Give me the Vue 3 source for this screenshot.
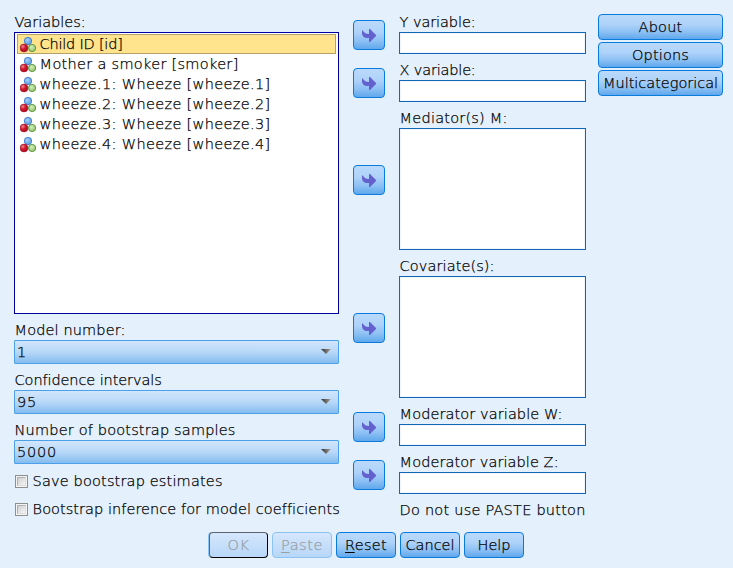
<script setup>
const variables = [
  { text: 'Child ID [id]', width: 83, selected: true },
  { text: 'Mother a smoker [smoker]', width: 199 },
  { text: 'wheeze.1: Wheeze [wheeze.1]', width: 231 },
  { text: 'wheeze.2: Wheeze [wheeze.2]', width: 231 },
  { text: 'wheeze.3: Wheeze [wheeze.3]', width: 231 },
  { text: 'wheeze.4: Wheeze [wheeze.4]', width: 231 },
]
const selects = [
  { label: 'Model number:', width: 111, value: '1', valueWidth: 9 },
  { label: 'Confidence intervals', width: 147, value: '95', valueWidth: 20 },
  { label: 'Number of bootstrap samples', width: 221, value: '5000', valueWidth: 40 },
]
const checks = [
  { label: 'Save bootstrap estimates', width: 190 },
  { label: 'Bootstrap inference for model coefficients', width: 307 },
]
const targets = [
  { label: 'Y variable:', width: 76 },
  { label: 'X variable:', width: 76 },
  { label: 'Mediator(s) M:', width: 108, tall: true },
  { label: 'Covariate(s):', width: 95, tall: true },
  { label: 'Moderator variable W:', width: 163 },
  { label: 'Moderator variable Z:', width: 159 },
]
const side = [
  { label: 'About', width: 44 },
  { label: 'Options', width: 57 },
  { label: 'Multicategorical', width: 115 },
]
const actions = [
  { key: '', label: 'OK', width: 22, kind: 'default' },
  { key: 'P', label: 'aste', width: 42, kind: 'disabled' },
  { key: 'R', label: 'eset', width: 42 },
  { key: '', label: 'Cancel', width: 49 },
  { key: '', label: 'Help', width: 33 },
]

// Spreads the letters of a label over the given width.
const vFit = {
  mounted(el, { value }) {
    const natural = el.getBoundingClientRect().width
    el.style.letterSpacing = `${(value - natural) / el.textContent.length}px`
  },
}
</script>

<template>
  <div class="dialog">
    <div class="columns">
      <section class="left">
        <div class="label"><span v-fit="71" class="t">Variables:</span></div>
        <div class="list">
          <div v-for="v in variables" :key="v.text" class="item" :class="{ selected: v.selected }">
            <svg class="balls" width="16" height="16" viewBox="0 0 16 16">
              <defs>
                <radialGradient id="blue" cx=".4" cy=".35" r=".65"><stop offset="0" stop-color="#a9d0f8" /><stop offset="1" stop-color="#5b9be0" /></radialGradient>
                <radialGradient id="red" cx=".35" cy=".3" r=".7"><stop offset="0" stop-color="#f58a94" /><stop offset=".5" stop-color="#d01830" /><stop offset="1" stop-color="#b00c20" /></radialGradient>
                <radialGradient id="green" cx=".4" cy=".35" r=".65"><stop offset="0" stop-color="#d3edba" /><stop offset="1" stop-color="#94c870" /></radialGradient>
              </defs>
              <circle cx="8" cy="4" r="3.7" fill="url(#blue)" stroke="#3b7fc8" stroke-width=".9" />
              <circle cx="4" cy="11" r="3.9" fill="url(#red)" stroke="#a81426" stroke-width=".7" />
              <circle cx="12.1" cy="11" r="3.6" fill="url(#green)" stroke="#548c38" stroke-width=".9" />
            </svg>
            <span v-fit="v.width" class="t">{{ v.text }}</span>
          </div>
        </div>
        <div v-for="s in selects" :key="s.label" class="group">
          <div class="label"><span v-fit="s.width" class="t">{{ s.label }}</span></div>
          <div class="select">
            <span v-fit="s.valueWidth" class="t">{{ s.value }}</span>
            <svg width="10" height="5" viewBox="0 0 10 5">
              <defs><linearGradient id="tri"><stop offset="0" stop-color="#303030" /><stop offset="1" stop-color="#aaa49c" /></linearGradient></defs>
              <path d="M0 0H10L5 5Z" fill="url(#tri)" />
            </svg>
          </div>
        </div>
        <div class="checks">
          <div v-for="c in checks" :key="c.label" class="check">
            <span class="box"><i></i></span>
            <span v-fit="c.width" class="t">{{ c.label }}</span>
          </div>
        </div>
      </section>

      <section class="middle">
        <div v-for="t in targets" :key="t.label" class="target" :class="{ tall: t.tall }">
          <button class="btn arrow">
            <svg width="14" height="13" viewBox="0 0 14 13">
              <path d="M0 1L3 4Q4 5 7 5V0H8L14 6V7L8 13H7V9H4Q0 8 0 4Z" fill="#6461cf" />
            </svg>
          </button>
          <div>
            <div class="label"><span v-fit="t.width" class="t">{{ t.label }}</span></div>
            <div class="field"></div>
          </div>
        </div>
        <div class="note label"><span v-fit="186" class="t">Do not use PASTE button</span></div>
      </section>

      <section class="side">
        <button v-for="b in side" :key="b.label" class="btn"><span v-fit="b.width" class="t">{{ b.label }}</span></button>
      </section>
    </div>

    <div class="actions">
      <button v-for="a in actions" :key="a.label" class="btn" :class="a.kind">
        <span v-fit="a.width" class="t"><u v-if="a.key">{{ a.key }}</u>{{ a.label }}</span>
      </button>
    </div>
  </div>
</template>

<style>
body { background: #e4f0fc; }
</style>

<style scoped>
.dialog {
  box-sizing: border-box;
  width: 733px;
  height: 568px;
  padding-top: 14px;
  background: #e4f0fc;
  color: #000;
  font: 200 14.5px/18px "DejaVu Sans", sans-serif;
}
.t { display: inline-block; white-space: pre; line-height: 18px; -webkit-text-stroke: 0.25px currentColor; }
.columns {
  display: grid;
  grid-template-columns: 325px 233px 125px;
  column-gap: 14px;
  padding-left: 14px;
  height: 518px;
  align-items: start;
}
.label { height: 18px; padding-left: 0.6px; box-sizing: border-box; line-height: 17px; }
.label .t { line-height: 17px; }
.list {
  box-sizing: border-box;
  height: 282px;
  border: 1px solid #0000a0;
  background: #fff;
  padding: 1px 2px;
}
.item {
  box-sizing: border-box;
  height: 20px;
  display: flex;
  align-items: center;
  gap: 3.6px;
  padding-left: 2px;
  border: 1px solid transparent;
}
.item.selected { background: #ffe48d; border-color: #b5a268; }
.balls { flex: none; margin-top: 1px; }
.group { margin-top: 8px; }
.select {
  box-sizing: border-box;
  height: 24px;
  border: 1px solid #4ba0ea;
  border-radius: 1px;
  background: linear-gradient(#d2e6fc, #b8d8f8 50%, #85bcf0);
  display: flex;
  align-items: center;
  justify-content: space-between;
  padding: 0 7px 0 2px;
}
.select svg { margin-bottom: 1px; }
.checks { display: flex; flex-direction: column; gap: 10px; margin-top: 8px; }
.check { display: flex; align-items: center; height: 18px; gap: 4.6px; padding-left: 1px; }
.box {
  box-sizing: border-box;
  flex: none;
  width: 13px;
  height: 13px;
  border: 1px solid #8e8f8f;
  background: #f4f4f4;
  padding: 1px;
  display: flex;
  margin-top: 1px;
}
.box i { flex: 1; border: 1px solid; border-color: #aeb3b9 #dcdcdc #dcdcdc #aeb3b9; background: linear-gradient(135deg, #cfcfd0, #f6f6f6); }
.middle { display: flex; flex-direction: column; gap: 8px; }
.target { display: grid; grid-template-columns: 32px 187px; column-gap: 14px; align-items: center; }
.arrow { width: 32px; height: 30px; }
.target:not(.tall) .arrow { margin-top: 2px; }
.field { box-sizing: border-box; height: 22px; border: 1px solid #1267b8; background: #fff; box-shadow: inset 0 0 0 1px #f0f5f9; }
.tall .field { height: 122px; }
.note { padding-left: 46.6px; }
.side { display: flex; flex-direction: column; gap: 2px; margin-left: -2px; width: 125px; }
.btn {
  box-sizing: border-box;
  display: flex;
  align-items: center;
  justify-content: center;
  padding: 0;
  margin: 0;
  border: 1px solid #087bdc;
  border-radius: 4px;
  background: linear-gradient(#badafb, #aed2f9 40%, #8ec1f4 70%, #5fa8ec);
  color: #000;
  font: inherit;
}
.side .btn, .actions .btn { height: 26px; }
.actions { display: flex; gap: 4px; padding-left: 208px; }
.actions .btn { width: 60px; }
.actions .disabled { border-color: #8cc3f2; color: #999fa8; background: linear-gradient(#d5e7fc, #b7d7f8); }
.actions .btn.default { width: 59px; margin-left: 1px; border-color: #5d6470 #000 #000 #5d6470; color: #999fa8; background: linear-gradient(#d5e7fc, #b7d7f8); box-shadow: -1px 0 #8cc3f2; }
u { text-decoration-thickness: 1px; text-underline-offset: 2px; }
</style>
